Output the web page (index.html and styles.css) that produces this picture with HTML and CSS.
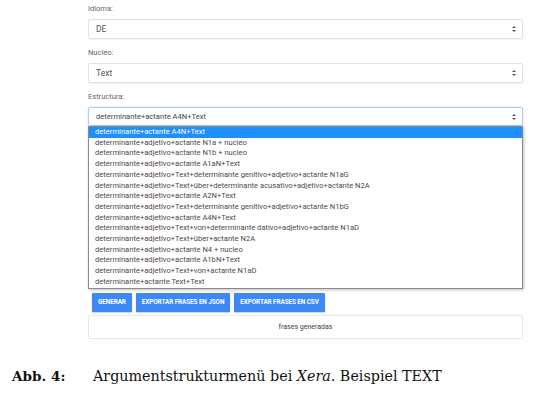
FILE: index.html
```html
<!doctype html>
<html lang="en">
	<head>
		<title>Xera</title>
		<meta charset="utf-8">
		<link rel="stylesheet" href="styles.css">
	</head>
	<body>
<div class="shot">
	<div class="form">
		<div class="group">
			<label>Idioma:</label>
			<div class="select"><span>DE</span><i class="caret"></i></div>
		</div>
		<div class="group">
			<label>Nucleo:</label>
			<div class="select"><span>Text</span><i class="caret"></i></div>
		</div>
		<div class="group last">
			<label>Estructura:</label>
			<div class="select focus"><span>determinante+actante A4N+Text</span><i class="caret"></i></div>
			<ul class="options">
				<li class="on">determinante+actante A4N+Text</li>
				<li>determinante+adjetivo+actante N1a + nucleo</li>
				<li>determinante+adjetivo+actante N1b + nucleo</li>
				<li>determinante+adjetivo+actante A1aN+Text</li>
				<li>determinante+adjetivo+Text+determinante genitivo+adjetivo+actante N1aG</li>
				<li>determinante+adjetivo+Text+über+determinante acusativo+adjetivo+actante N2A</li>
				<li>determinante+adjetivo+actante A2N+Text</li>
				<li>determinante+adjetivo+Text+determinante genitivo+adjetivo+actante N1bG</li>
				<li>determinante+adjetivo+actante A4N+Text</li>
				<li>determinante+adjetivo+Text+von+determinante dativo+adjetivo+actante N1aD</li>
				<li>determinante+adjetivo+Text+über+actante N2A</li>
				<li>determinante+adjetivo+actante N4 + nucleo</li>
				<li>determinante+adjetivo+actante A1bN+Text</li>
				<li>determinante+adjetivo+Text+von+actante N1aD</li>
				<li>determinante+actante Text+Text</li>
			</ul>
		</div>
		<div class="buttons">
			<button>Generar</button>
			<button>Exportar frases en JSON</button>
			<button>Exportar frases en CSV</button>
		</div>
		<div class="output">frases generadas</div>
	</div>
	<p class="caption"><b>Abb. 4:</b><span>Argumentstrukturmenü bei <i>Xera</i>. Beispiel TEXT</span></p>
</div>
	</body>
</html>
```

FILE: styles.css
```css
* {
	box-sizing: border-box;
	margin: 0;
	padding: 0;
}
html, body {
	background: #ffffff;
}
body {
	font-family: Roboto, "Liberation Sans", sans-serif;
	color: #555555;
	font-size: 8px;
}
.shot { width: 541px; height: 394px; overflow: hidden; }
.form { margin-left: 88px; width: 435px; padding-top: 3px; }
.group { margin-bottom: 8px; }
.group.last { margin-bottom: 4px; }
label { display: block; line-height: 12px; margin-bottom: 4px; color: #666; font-size: 7.5px; }
.select {
	height: 20px;
	border: 1px solid #e2e2e2;
	border-radius: 2px;
	box-shadow: 0 1px 2px rgba(0,0,0,.06);
	display: flex;
	align-items: center;
	justify-content: space-between;
	padding: 0 6px 0 7px;
	font-size: 8.5px;
	color: #555;
}
.select.focus { height: 19px; border-color: #a9cdf0; box-shadow: 0 0 2px rgba(80,150,230,.35); color: #444; font-size: 7.6px; }
.caret { position: relative; width: 4px; height: 6px; }
.caret::before, .caret::after {
	content: ""; position: absolute; left: 0;
	border-left: 2px solid transparent; border-right: 2px solid transparent;
}
.caret::before { top: 0; border-bottom: 2.5px solid #555; }
.caret::after { bottom: 0; border-top: 2.5px solid #555; }
.options {
	list-style: none;
	border: 1px solid #8a8a8a;
	box-shadow: 1px 1px 3px rgba(0,0,0,.25);
	background: #fff;
	width: 435px;
	margin-top: 0;
}
.options li {
	line-height: 10.7px;
	font-size: 7.6px;
	color: #4a4a4a;
	padding-left: 6px;
	white-space: nowrap;
}
.options li.on { background: #1e8fff; color: #fff; }
.buttons { display: flex; gap: 4px; padding-left: 4px; margin-bottom: 3px; }
button {
	height: 19px;
	border: none;
	border-radius: 1px;
	background: #3d88f2;
	color: #fff;
	font-family: Roboto, sans-serif;
	font-weight: bold;
	font-size: 6.4px;
	text-transform: uppercase;
	padding: 0 6px;
	box-shadow: 0 1px 2px rgba(0,0,0,.2);
	letter-spacing: -0.1px;
}
.output {
	height: 24px;
	border: 1px solid #e6e6e6;
	border-radius: 2px;
	text-align: center;
	line-height: 22px;
	font-size: 7px;
	color: #444;
}
.caption {
	margin-top: 29px;
	padding-left: 12px;
	font-family: "DejaVu Serif", serif;
	font-size: 14.3px;
	color: #111;
	display: flex;
	align-items: baseline;
}
.caption b { width: 81px; font-size: 13.6px; }
```
